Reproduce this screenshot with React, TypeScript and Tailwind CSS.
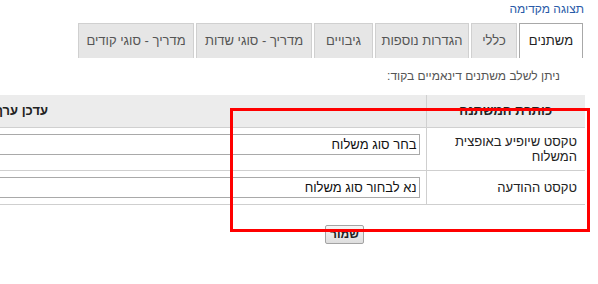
import React from 'react';

const tabs = [
  { label: 'משתנים', w: 'w-[64px]', active: true },
  { label: 'כללי', w: 'w-[46px]', active: false },
  { label: 'הגדרות נוספות', w: 'w-[94px]', active: false },
  { label: 'גיבויים', w: 'w-[59px]', active: false },
  { label: 'מדריך - סוגי שדות', w: 'w-[116px]', active: false },
  { label: 'מדריך - סוגי קודים', w: 'w-[116px]', active: false },
];

const rows = [
  { title: 'טקסט שיופיע באופצית המשלוח', value: 'בחר סוג משלוח' },
  { title: 'טקסט ההודעה', value: 'נא לבחור סוג משלוח' },
];

export default function App() {
  return (
    <div
      dir="rtl"
      className="relative w-[598px] h-[284px] overflow-hidden bg-white font-['Liberation_Sans',Arial,sans-serif] text-[13px] text-[#222]"
    >
      {/* Preview link */}
      <div className="h-[19px] pr-[14px] pt-[1px] leading-[16px]">
        <a className="text-[12px] text-[#2a5ba8]">תצוגה מקדימה</a>
      </div>

      {/* Tabs */}
      <div className="mt-[4px] flex gap-[2px] pr-[15px]">
        {tabs.map((t) => (
          <div
            key={t.label}
            className={`${t.w} h-[35px] flex items-center justify-center border border-b-0 ${
              t.active ? 'bg-white border-[#a8a8a8] text-[#222]' : 'bg-[#e6e6e6] border-[#d0d0d0] text-[#555]'
            }`}
          >
            {t.label}
          </div>
        ))}
      </div>

      {/* Hint */}
      <p className="mt-[11px] h-[14px] pr-[38px] text-[12px] leading-[14px] text-[#555]">
        ניתן לשלב משתנים דינאמיים בקוד:
      </p>

      {/* Variables table */}
      <table className="mt-[12px] mr-[13px] w-[967px] table-fixed border-collapse">
        <thead>
          <tr className="bg-[#ececec]">
            <th className="w-[159px] h-[32px] border-b border-l border-[#d0d0d0] font-bold text-center">
              כותרת המשתנה
            </th>
            <th className="h-[32px] border-b border-[#d0d0d0] font-bold text-center">עדכן ערך</th>
          </tr>
        </thead>
        <tbody>
          {rows.map((r) => (
            <tr key={r.title} className="border-b border-[#cfcfcf]">
              <td className="border-l border-[#cfcfcf] py-[6px] pr-[8px] pl-[6px] leading-[15px] align-middle">
                {r.title}
              </td>
              <td className="py-[6px] pr-[6px] align-top">
                <input
                  readOnly
                  value={r.value}
                  className="block w-[560px] h-[21px] border border-[#a9a9a9] px-[2px] text-[13px] text-[#111] bg-white outline-none"
                />
              </td>
            </tr>
          ))}
        </tbody>
      </table>

      {/* Save */}
      <div className="mt-[20px] mr-[234px] flex">
        <button className="w-[39px] h-[19px] rounded-[2px] border border-[#a3a3a3] bg-gradient-to-b from-[#f6f6f6] to-[#dedede] text-[12px] font-bold leading-[16px] text-[#222]">
          שמור
        </button>
      </div>

      {/* Annotation frame */}
      <div className="absolute left-[230px] top-[108px] w-[360px] h-[124px] border-[3px] border-[#ff0000]" />
    </div>
  );
}
